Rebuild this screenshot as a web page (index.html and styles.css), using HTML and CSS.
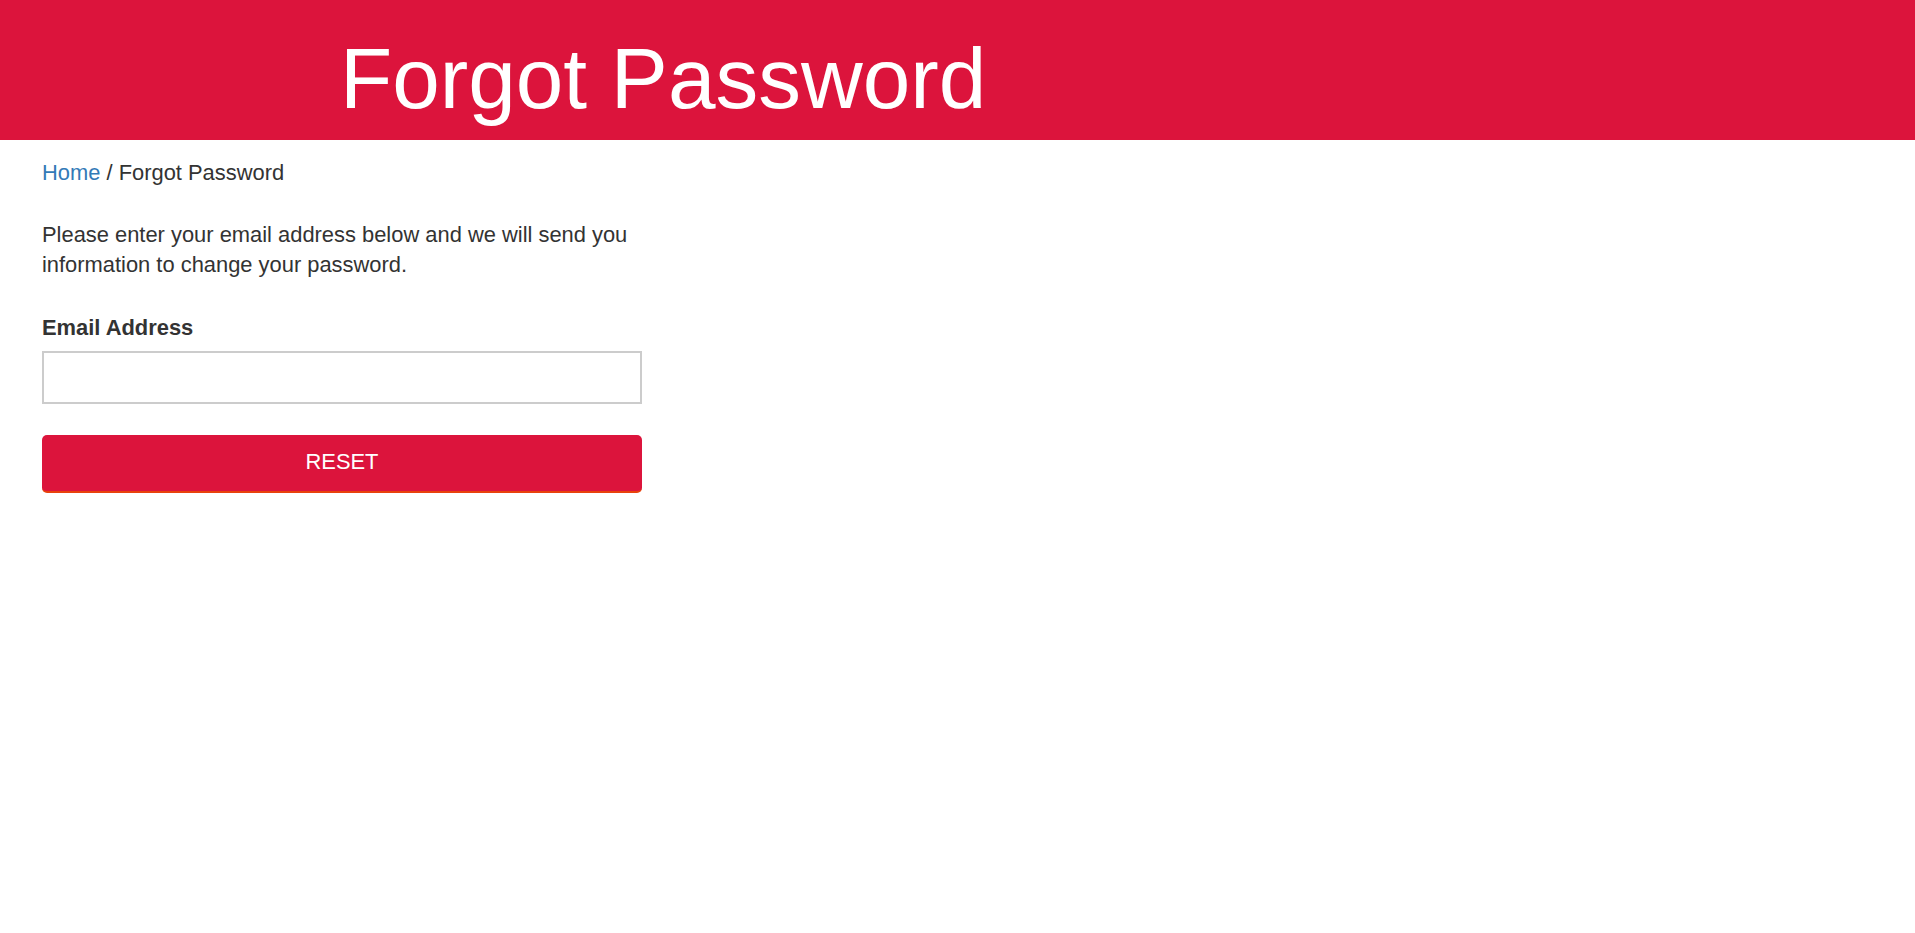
FILE: index.html
```html
<!DOCTYPE html>
<html lang="en">
<head>
<meta charset="utf-8">
<title>Forgot Password</title>
<link rel="stylesheet" href="styles.css">
</head>
<body>
<header class="page-header">
  <h1 class="page-title">Forgot Password</h1>
</header>
<main class="content">
  <nav class="breadcrumb"><a href="#" class="crumb-link">Home</a> / Forgot Password</nav>
  <p class="intro">Please enter your email address below and we will send you information to change your password.</p>
  <form class="reset-form">
    <label class="field-label" for="email">Email Address</label>
    <input class="field-input" id="email" type="email">
    <button class="reset-btn" type="button">RESET</button>
  </form>
</main>
</body>
</html>
```
FILE: styles.css
```css
html, body {
  margin: 0;
  padding: 0;
  background: #fff;
}
body {
  font-family: "Liberation Sans", Arial, sans-serif;
  font-size: 21.9px;
  line-height: 30px;
  color: #333;
}
.page-header {
  background: #dc143c;
  height: 140px;
  box-sizing: border-box;
  padding: 31px 0 0 340px;
}
.page-title {
  margin: 0;
  font-weight: normal;
  font-size: 85.5px;
  line-height: 95px;
  color: #fff;
}
.content {
  padding: 18px 0 0 42px;
  width: 600px;
}
.breadcrumb {
  margin: 0;
}
.crumb-link {
  color: #337ab7;
  text-decoration: none;
}
.intro {
  margin: 31.5px 0 0;
}
.reset-form {
  display: flex;
  flex-direction: column;
  margin-top: 33px;
}
.field-label {
  font-weight: bold;
}
.field-input {
  margin-top: 8.5px;
  height: 53px;
  box-sizing: border-box;
  border: 2px solid #ccc;
  background: #fff;
  padding: 0 10px;
  font: inherit;
  outline: none;
}
.reset-btn {
  margin-top: 31px;
  height: 58px;
  box-sizing: border-box;
  border: none;
  border-bottom: 2px solid #e8420c;
  border-radius: 5px;
  background: #dc143c;
  color: #fff;
  font-family: "Liberation Sans", Arial, sans-serif;
  font-size: 21.9px;
  padding: 0 0 3px;
  cursor: pointer;
}
```
